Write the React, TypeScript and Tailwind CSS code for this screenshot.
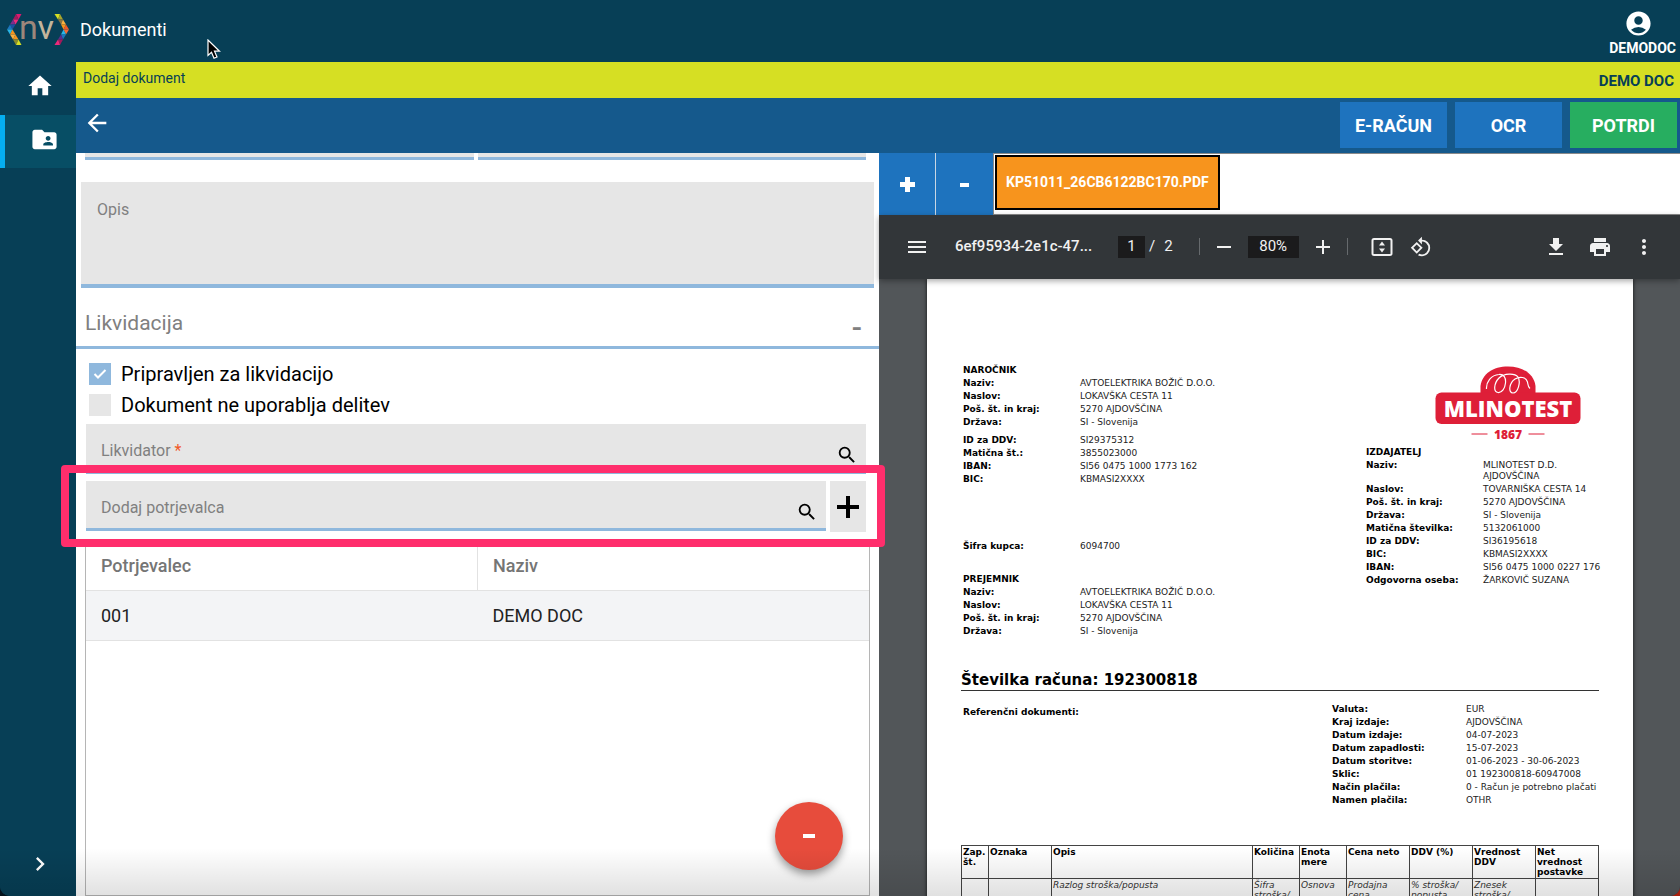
import {
  MdAccountCircle,
  MdAdd,
  MdArrowBack,
  MdChevronRight,
  MdFileDownload,
  MdFolderShared,
  MdHome,
  MdMenu,
  MdMoreVert,
  MdPrint,
  MdRemove,
  MdRotate90DegreesCcw,
  MdSearch,
} from 'react-icons/md'

type Row = [string, string]

const CUSTOMER: Row[] = [
  ['Naziv:', 'AVTOELEKTRIKA BOŽIČ D.O.O.'],
  ['Naslov:', 'LOKAVŠKA CESTA 11'],
  ['Poš. št. in kraj:', '5270 AJDOVŠČINA'],
  ['Država:', 'SI - Slovenija'],
]

const CUSTOMER_IDS: Row[] = [
  ['ID za DDV:', 'SI29375312'],
  ['Matična št.:', '3855023000'],
  ['IBAN:', 'SI56 0475 1000 1773 162'],
  ['BIC:', 'KBMASI2XXXX'],
]

const ISSUER: Row[] = [
  ['Naziv:', 'MLINOTEST D.D.\nAJDOVŠČINA'],
  ['Naslov:', 'TOVARNIŠKA CESTA 14'],
  ['Poš. št. in kraj:', '5270 AJDOVŠČINA'],
  ['Država:', 'SI - Slovenija'],
  ['Matična številka:', '5132061000'],
  ['ID za DDV:', 'SI36195618'],
  ['BIC:', 'KBMASI2XXXX'],
  ['IBAN:', 'SI56 0475 1000 0227 176'],
  ['Odgovorna oseba:', 'ŽARKOVIČ SUZANA'],
]

const PAYMENT: Row[] = [
  ['Valuta:', 'EUR'],
  ['Kraj izdaje:', 'AJDOVŠČINA'],
  ['Datum izdaje:', '04-07-2023'],
  ['Datum zapadlosti:', '15-07-2023'],
  ['Datum storitve:', '01-06-2023 - 30-06-2023'],
  ['Sklic:', '01 192300818-60947008'],
  ['Način plačila:', '0 - Račun je potrebno plačati'],
  ['Namen plačila:', 'OTHR'],
]

const ITEM_COLUMNS = [
  { head: 'Zap. št.', sub: '', width: 'w-[27px]' },
  { head: 'Oznaka', sub: '', width: 'w-[63px]' },
  { head: 'Opis', sub: 'Razlog stroška/popusta', width: '' },
  { head: 'Količina', sub: 'Šifra stroška/', width: 'w-[47px]' },
  { head: 'Enota mere', sub: 'Osnova', width: 'w-[47px]' },
  { head: 'Cena neto', sub: 'Prodajna cena', width: 'w-[63px]' },
  { head: 'DDV (%)', sub: '% stroška/ popusta', width: 'w-[63px]' },
  { head: 'Vrednost DDV', sub: 'Znesek stroška/', width: 'w-[63px]' },
  { head: 'Net vrednost postavke', sub: '', width: 'w-[63px]' },
]

function BrandLogo() {
  return (
    <svg width="62" height="55" viewBox="0 -12 62 55" aria-label="nv">
      <g>
        <path d="M9 0H14.500L11.500 5.500Z" fill="#d91b6f" />
        <path d="M9 0L11.500 5.500H6Z" fill="#a3195b" />
        <path d="M6 5.500H11.500L8.500 10.500Z" fill="#ee2a7b" />
        <path d="M6 5.500L8.500 10.500H3Z" fill="#7b2d8b" />
        <path d="M3 10.500H8.500L5.500 15.500Z" fill="#1b4fa0" />
        <path d="M3 10.500L5.500 15.500H0Z" fill="#1c75bc" />
        <path d="M0 15.500H5.500L3 20.500Z" fill="#29b6e8" />
        <path d="M5.500 15.500L8.500 20.500H3Z" fill="#f7941d" />
        <path d="M3 20.500H8.500L6 25.500Z" fill="#fbb040" />
        <path d="M8.500 20.500L11.500 25.500H6Z" fill="#f7941d" />
        <path d="M6 25.500H11.500L9 31Z" fill="#8b8a2c" />
        <path d="M11.500 25.500L14.500 31H9Z" fill="#d6df23" />
      </g>
      <g>
        <path d="M47.500 0H53L51 5.500Z" fill="#d6df23" />
        <path d="M53 0L56 5.500H51Z" fill="#a8a52c" />
        <path d="M51 5.500H56L54 10.500Z" fill="#8b7340" />
        <path d="M56 5.500L59 10.500H54Z" fill="#fbb040" />
        <path d="M54 10.500H59L56.500 15.500Z" fill="#f7941d" />
        <path d="M59 10.500L62 15.500H56.500Z" fill="#f15a29" />
        <path d="M56.500 15.500H62L59 20.500Z" fill="#f26b35" />
        <path d="M56.500 15.500L59 20.500H54Z" fill="#29b6e8" />
        <path d="M54 20.500H59L56 25.500Z" fill="#1c75bc" />
        <path d="M54 20.500L56 25.500H51Z" fill="#5b2d8b" />
        <path d="M51 25.500H56L53 31Z" fill="#a3195b" />
        <path d="M51 25.500L53 31H47.500Z" fill="#ee2a7b" />
      </g>
      <text x="12" y="24.500" fontFamily="Roboto, sans-serif" fontSize="34" fill="#9c877b">
        n
      </text>
      <text x="30.500" y="24.500" fontFamily="Roboto, sans-serif" fontSize="34" fill="#c3b59b">
        v
      </text>
    </svg>
  )
}

function MlinotestLogo() {
  return (
    <svg width="146" height="78" viewBox="0 0 146 78" aria-label="Mlinotest 1867">
      <path d="M45.500 27V20C47 8 58 .5 73 .5S99 8 100.500 20V27Z" fill="#de1f38" />
      <rect x=".5" y="26.500" width="145" height="31.500" rx="6" fill="#de1f38" />
      <path
        d="M51.500 23C51 16 56 9 64 8.500C69 8 71 12 70.500 17C70 22 67 27 63 26.500C58 26 59 17 64 12C69 7 80 7 83 11C86 16 83 27 78 27C73 27 74 17 80 13C85 10 91 11 92.500 16C93 19 93 21 95 22.500"
        fill="none"
        stroke="#fff"
        strokeWidth="1.200"
      />
      <text
        x="73"
        y="50.500"
        textAnchor="middle"
        fontFamily="'Open Sans', sans-serif"
        fontWeight="800"
        fontSize="22"
        fill="#fff"
      >
        MLINOTEST
      </text>
      <path d="M36.500 68H52.500M93.500 68H109.500" stroke="#de1f38" />
      <text
        x="73"
        y="72.500"
        textAnchor="middle"
        fontFamily="'Open Sans', sans-serif"
        fontWeight="800"
        fontSize="12"
        fill="#de1f38"
      >
        1867
      </text>
    </svg>
  )
}

function FitPageIcon() {
  return (
    <svg width="24" height="24" viewBox="0 0 24 24" fill="currentColor">
      <rect x="2.500" y="4" width="19" height="16" rx="1.500" fill="none" stroke="currentColor" strokeWidth="2" />
      <path d="M12 6.500L15 10.500H9ZM12 17.500L9 13.500H15Z" />
    </svg>
  )
}

function Details({ rows, columns }: { rows: Row[]; columns: string }) {
  return (
    <dl className={`grid ${columns}`}>
      {rows.map(([label, value]) => (
        <div key={label} className="col-span-2 grid grid-cols-subgrid">
          <dt className="py-px font-bold">{label}</dt>
          <dd className="py-px whitespace-pre text-[#222]">{value}</dd>
        </div>
      ))}
    </dl>
  )
}

function SearchField({ id, label, required }: { id: string; label: string; required?: boolean }) {
  return (
    <div className="flex h-[50px] flex-1 items-center border-b-3 border-[#8fb8dd] bg-[#e6e6e6] pt-[7px] pr-2 pl-[15px]">
      <label htmlFor={id} className="text-base text-[#808080]">
        {label}
        {required && <span className="text-[#f15a29]"> *</span>}
      </label>
      <input id={id} type="text" className="min-w-0 flex-1 bg-transparent px-2 outline-none" />
      <button type="button" aria-label="Išči" className="pt-2 text-black">
        <MdSearch size={22} />
      </button>
    </div>
  )
}

function Sidebar() {
  return (
    <nav className="flex w-19 flex-col bg-[#073f56] text-white">
      <a href="#home" aria-label="Domov" className="flex h-[53px] items-center pb-[6px] pl-[26px]">
        <MdHome size={28} />
      </a>
      <a
        href="#documents"
        aria-label="Dokumenti"
        className="flex h-[53px] items-center border-l-5 border-[#05aef0] bg-[#074e65] pb-1 pl-[25px]"
      >
        <MdFolderShared size={29} />
      </a>
      <button type="button" aria-label="Razširi meni" className="mt-auto mb-[18px] flex pl-[26px]">
        <MdChevronRight size={28} />
      </button>
    </nav>
  )
}

function DocumentForm() {
  return (
    <form className="relative flex w-[calc(50%+1px)] shrink-0 flex-col bg-white">
      <div className="flex gap-1 pr-[13px] pl-[9px]">
        <div className="h-[7px] flex-1 border-b-3 border-[#8fb8dd] bg-[#e6e6e6]" />
        <div className="h-[7px] flex-1 border-b-3 border-[#8fb8dd] bg-[#e6e6e6]" />
      </div>

      <div className="mx-[5px] mt-[22px] flex h-[106px] flex-col border-b-4 border-[#8fb8dd] bg-[#e6e6e6] px-4 pt-4">
        <label htmlFor="opis" className="text-base leading-6 text-[#808080]">
          Opis
        </label>
        <textarea id="opis" className="flex-1 resize-none bg-transparent outline-none" />
      </div>

      <div className="flex h-[61px] items-center justify-between border-b-3 border-[#8fb8dd] pt-[14px] pr-[17px] pl-[9px] text-[#808080]">
        <h2 className="text-[21px]">Likvidacija</h2>
        <button type="button" aria-label="Strni" className="pt-2 text-3xl font-medium">
          -
        </button>
      </div>

      <div className="mt-[10px] mb-1 flex flex-col gap-px pl-[13px] text-[20px] text-black">
        <label className="flex h-[30px] items-center gap-[10px]">
          <input type="checkbox" defaultChecked className="peer sr-only" />
          <span className="flex size-[22px] items-center justify-center bg-[#8fb8dd]">
            <svg width="14" height="12" viewBox="0 0 14 12" fill="none" stroke="#fff" strokeWidth="2">
              <path d="M1.500 6L5 9.500L12.500 2" />
            </svg>
          </span>
          Pripravljen za likvidacijo
        </label>
        <label className="flex h-[30px] items-center gap-[10px]">
          <input type="checkbox" className="size-[22px] appearance-none bg-[#e6e6e6]" />
          Dokument ne uporablja delitev
        </label>
      </div>

      <div className="mr-[13px] ml-[10px] flex">
        <SearchField id="likvidator" label="Likvidator" required />
      </div>

      <div className="relative mt-[7px] mr-[13px] ml-[10px] flex gap-1">
        <SearchField id="potrjevalec" label="Dodaj potrjevalca" />
        <button
          type="button"
          aria-label="Dodaj"
          className="flex h-[51px] w-9 items-center justify-center bg-[#e6e6e6] text-black"
        >
          <svg width="22" height="22" viewBox="0 0 22 22" stroke="currentColor" strokeWidth="4">
            <path d="M11 0V22M0 11H22" />
          </svg>
        </button>
        <div className="pointer-events-none absolute -top-4 -right-[19px] -bottom-[15px] -left-[25px] z-10 rounded-sm border-8 border-[#ff2e6c]" />
      </div>

      <div className="mx-[9px] mt-2 flex-1 border border-[#b5b5b5]">
        <table className="w-full table-fixed text-left text-[18px]">
          <thead>
            <tr className="h-[49px] border-b border-[#e2e2e2] text-[#757575]">
              <th className="border-r border-[#e2e2e2] px-[15px] font-medium">Potrjevalec</th>
              <th className="px-[15px] font-medium">Naziv</th>
            </tr>
          </thead>
          <tbody>
            <tr className="h-[50px] border-b border-[#e2e2e2] bg-[#f3f4f6] text-[#222]">
              <td className="px-[15px]">001</td>
              <td className="px-[15px]">DEMO DOC</td>
            </tr>
          </tbody>
        </table>
      </div>

      <button
        type="button"
        aria-label="Odstrani"
        className="absolute right-9 bottom-[26px] flex size-17 items-center justify-center rounded-full bg-[#e74c3c] shadow-[0_4px_8px_rgba(0,0,0,0.4)]"
      >
        <span className="h-1 w-3 bg-white" />
      </button>
    </form>
  )
}

function ViewerToolbar() {
  return (
    <div className="z-1 flex h-16 shrink-0 items-center bg-[#323639] pr-6 pb-px pl-[26px] text-[#f1f1f1] shadow-[0_2px_6px_rgba(0,0,0,0.35)]">
      <button type="button" aria-label="Meni">
        <MdMenu size={24} />
      </button>
      <span className="ml-[26px] w-[140px] text-[15px] font-medium whitespace-nowrap">6ef95934-2e1c-47...</span>
      <input
        aria-label="Stran"
        defaultValue="1"
        className="ml-[23px] h-[22px] w-[27px] bg-[#1b1b1c] text-center text-[15px]"
      />
      <span className="ml-1 flex gap-[9px] text-[15px]">
        <span>/</span>
        <span>2</span>
      </span>
      <span className="ml-[26px] h-[17px] w-px bg-[#666a6d]" />
      <button type="button" aria-label="Pomanjšaj" className="ml-3">
        <MdRemove size={24} />
      </button>
      <input
        aria-label="Povečava"
        defaultValue="80%"
        className="ml-3 h-[22px] w-[51px] bg-[#1b1b1c] text-center text-[15px]"
      />
      <button type="button" aria-label="Povečaj" className="ml-3">
        <MdAdd size={24} />
      </button>
      <span className="ml-3 h-[17px] w-px bg-[#666a6d]" />
      <button type="button" aria-label="Prilagodi strani" className="ml-[22px]">
        <FitPageIcon />
      </button>
      <button type="button" aria-label="Zavrti" className="ml-4">
        <MdRotate90DegreesCcw size={22} />
      </button>
      <div className="ml-auto flex gap-5">
        <button type="button" aria-label="Prenesi">
          <MdFileDownload size={24} />
        </button>
        <button type="button" aria-label="Natisni">
          <MdPrint size={24} />
        </button>
        <button type="button" aria-label="Več">
          <MdMoreVert size={24} />
        </button>
      </div>
    </div>
  )
}

function Invoice() {
  return (
    <article className="mr-[47px] ml-12 flex-1 bg-white pt-[85px] pr-[34px] pl-[34px] font-['DejaVu_Sans',sans-serif] text-[9px] leading-[11px] text-black shadow-[0_0_4px_rgba(0,0,0,0.8)]">
      <div className="flex justify-between pl-[2px]">
        <div>
          <h3 className="py-px font-bold">NAROČNIK</h3>
          <Details rows={CUSTOMER} columns="grid-cols-[117px_auto]" />
          <div className="mt-[5px]">
            <Details rows={CUSTOMER_IDS} columns="grid-cols-[117px_auto]" />
          </div>
          <div className="mt-[54px]">
            <Details rows={[['Šifra kupca:', '6094700']]} columns="grid-cols-[117px_auto]" />
          </div>
          <h3 className="mt-5 py-px font-bold">PREJEMNIK</h3>
          <Details rows={CUSTOMER} columns="grid-cols-[117px_auto]" />
        </div>
        <div className="w-[233px] pt-[2px]">
          <div className="mb-[2px] ml-[69px]">
            <MlinotestLogo />
          </div>
          <h3 className="py-px font-bold">IZDAJATELJ</h3>
          <Details rows={ISSUER} columns="grid-cols-[117px_auto]" />
        </div>
      </div>

      <h2 className="mt-8 border-b border-[#333] text-[15px] leading-5 font-bold">Številka računa: 192300818</h2>

      <div className="mt-3 flex justify-between pl-[2px]">
        <p className="pt-1 font-bold">Referenčni dokumenti:</p>
        <div className="w-[267px]">
          <Details rows={PAYMENT} columns="grid-cols-[134px_auto]" />
        </div>
      </div>

      <table className="mt-[38px] w-full table-fixed border-collapse text-left leading-[10px]">
        <thead>
          <tr className="h-[33px] align-top">
            {ITEM_COLUMNS.map((column) => (
              <th key={column.head} className={`border border-[#444] pt-px pl-px font-bold ${column.width}`}>
                {column.head}
              </th>
            ))}
          </tr>
        </thead>
        <tbody>
          <tr className="align-top italic">
            {ITEM_COLUMNS.map((column) => (
              <td key={column.head} className="border border-[#444] pt-px pl-px text-[#333]">
                {column.sub}
              </td>
            ))}
          </tr>
        </tbody>
      </table>
    </article>
  )
}

function DocumentViewer() {
  return (
    <section className="flex min-h-0 min-w-0 flex-1 flex-col bg-[#525659]">
      <div className="flex h-[62px] shrink-0 bg-white text-white">
        <button
          type="button"
          aria-label="Dodaj prilogo"
          className="flex w-[57px] items-center justify-center border-r border-[#c8d6e4] bg-[#1e73be]"
        >
          <svg width="15" height="15" viewBox="0 0 15 15" stroke="currentColor" strokeWidth="5">
            <path d="M7.500 0V15M0 7.500H15" />
          </svg>
        </button>
        <button
          type="button"
          aria-label="Odstrani prilogo"
          className="flex w-[58px] items-center justify-center border-r border-[#8a8a8a] bg-[#1e73be] pt-px"
        >
          <span className="h-1 w-[9px] bg-white" />
        </button>
        <div className="flex flex-1 border-y border-[#8a8a8a] pt-px pl-px">
          <button
            type="button"
            className="h-[55px] border-2 border-black bg-[#f7941d] px-[9px] text-[14px] font-bold"
          >
            KP51011_26CB6122BC170.PDF
          </button>
        </div>
      </div>
      <ViewerToolbar />
      <Invoice />
    </section>
  )
}

export default function App() {
  return (
    <div className="h-screen bg-linear-to-r from-[#04121b] to-[#a8200d] font-[Roboto,sans-serif]">
      <div className="relative flex h-full flex-col overflow-hidden rounded-b-[10px] bg-[#073f56]">
        <header className="flex h-[62px] shrink-0 items-center justify-between pr-1 pl-[7px] text-white">
          <div className="flex items-center gap-[11px] pb-[3px]">
            <BrandLogo />
            <h1 className="text-lg">Dokumenti</h1>
          </div>
          <button type="button" className="flex flex-col items-center pt-1 text-[14px] leading-5 font-bold">
            <MdAccountCircle size={29} className="mr-[9px]" />
            DEMODOC
          </button>
        </header>

        <div className="flex min-h-0 flex-1">
          <Sidebar />
          <main className="flex min-w-0 flex-1 flex-col">
            <div className="flex h-9 shrink-0 justify-between bg-[#d6df23] pr-[6px] pl-[7px] text-[#073f56]">
              <span className="pt-[6px] text-[14px]">Dodaj dokument</span>
              <span className="pt-2 text-[15px] font-bold">DEMO DOC</span>
            </div>
            <div className="flex h-[55px] shrink-0 items-center justify-between bg-[#15598c] pr-[3px] pb-px pl-[7px] text-white">
              <button type="button" aria-label="Nazaj" className="pb-1">
                <MdArrowBack size={28} />
              </button>
              <div className="flex gap-2 text-[18px] font-bold">
                <button type="button" className="h-[46px] w-[107px] bg-[#1e73be]">
                  E-RAČUN
                </button>
                <button type="button" className="h-[46px] w-[107px] bg-[#1e73be]">
                  OCR
                </button>
                <button type="button" className="h-[46px] w-[107px] bg-[#27ae60]">
                  POTRDI
                </button>
              </div>
            </div>
            <div className="flex min-h-0 flex-1">
              <DocumentForm />
              <DocumentViewer />
            </div>
          </main>
        </div>

        {/* Bottom shade */}
        <div
          aria-hidden="true"
          className="pointer-events-none absolute inset-x-0 bottom-0 z-10 h-12 bg-linear-to-t from-black/12 to-transparent"
        />

        {/* Mouse pointer */}
        <svg
          aria-hidden="true"
          className="pointer-events-none absolute top-[39px] left-[207px]"
          width="14"
          height="21"
          viewBox="0 0 14 21"
        >
          <path
            d="M1 1V16.500L4.500 13.300L7 19.300L10 18L7.500 12.200H12.500Z"
            fill="#000"
            stroke="#fff"
            strokeWidth="1.200"
          />
        </svg>
      </div>
    </div>
  )
}
